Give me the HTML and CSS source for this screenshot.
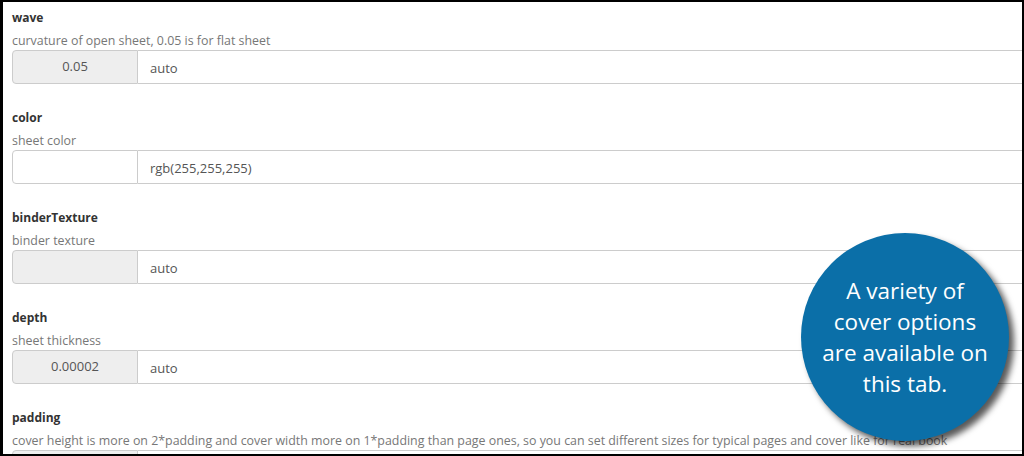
FILE: index.html
```html
<!DOCTYPE html>
<html>
<head>
<meta charset="utf-8">
<link rel="stylesheet" href="styles.css">
</head>
<body>
<div class="frame">
  <div class="options">
    <div class="field">
      <div class="label">wave</div>
      <div class="desc">curvature of open sheet, 0.05 is for flat sheet</div>
      <div class="group"><span class="addon">0.05</span><span class="input">auto</span></div>
    </div>
    <div class="field">
      <div class="label">color</div>
      <div class="desc">sheet color</div>
      <div class="group"><span class="addon white"></span><span class="input">rgb(255,255,255)</span></div>
    </div>
    <div class="field">
      <div class="label">binderTexture</div>
      <div class="desc">binder texture</div>
      <div class="group"><span class="addon"></span><span class="input">auto</span></div>
    </div>
    <div class="field">
      <div class="label">depth</div>
      <div class="desc">sheet thickness</div>
      <div class="group"><span class="addon">0.00002</span><span class="input">auto</span></div>
    </div>
    <div class="field">
      <div class="label">padding</div>
      <div class="desc">cover height is more on 2*padding and cover width more on 1*padding than page ones, so you can set different sizes for typical pages and cover like for real book</div>
      <div class="group"><span class="addon"></span><span class="input"></span></div>
    </div>
  </div>
  <div class="bubble">A variety of<br>cover options<br>are available on<br>this tab.</div>
</div>
</body>
</html>
```

FILE: styles.css
```css
html, body {
  margin: 0;
  padding: 0;
  background: #000;
  width: 1024px;
  height: 456px;
  overflow: hidden;
}
.frame {
  position: relative;
  margin: 2px 2px 0 3px;
  height: 452px;
  background: #fff;
  overflow: hidden;
  font-family: "Open Sans", "Noto Sans", sans-serif;
  font-size: 12px;
  color: #333;
}
.options {
  padding: 6px 0 0 9px;
  display: flex;
  flex-direction: column;
  gap: 24px;
}
.field {
  display: flex;
  flex-direction: column;
}
.label {
  font-weight: bold;
  line-height: 20px;
  height: 20px;
  color: #333;
}
.desc {
  margin-top: 3px;
  line-height: 20px;
  height: 19px;
  color: #777;
  font-size: 12.4px;
  white-space: nowrap;
}
.group {
  display: flex;
  height: 34px;
  width: 1040px;
}
.addon {
  box-sizing: border-box;
  width: 126px;
  border: 1px solid #ccc;
  border-radius: 4px 0 0 4px;
  background: #eee;
  color: #555;
  font-size: 13px;
  text-align: center;
  line-height: 30px;
}
.addon.white {
  background: #fff;
}
.input {
  flex: 1;
  box-sizing: border-box;
  border: 1px solid #ccc;
  border-left: none;
  padding: 0 12px;
  color: #555;
  font-size: 13px;
  line-height: 34px;
}
.bubble {
  position: absolute;
  left: 798px;
  top: 231px;
  width: 208px;
  height: 208px;
  border-radius: 50%;
  background: #0b6fa8;
  box-shadow: 5px 5px 6px rgba(0,0,0,0.65);
  color: #fff;
  font-family: "Open Sans", "Noto Sans", sans-serif;
  font-size: 22.5px;
  line-height: 31px;
  text-align: center;
  display: flex;
  align-items: center;
  justify-content: center;
}
```
